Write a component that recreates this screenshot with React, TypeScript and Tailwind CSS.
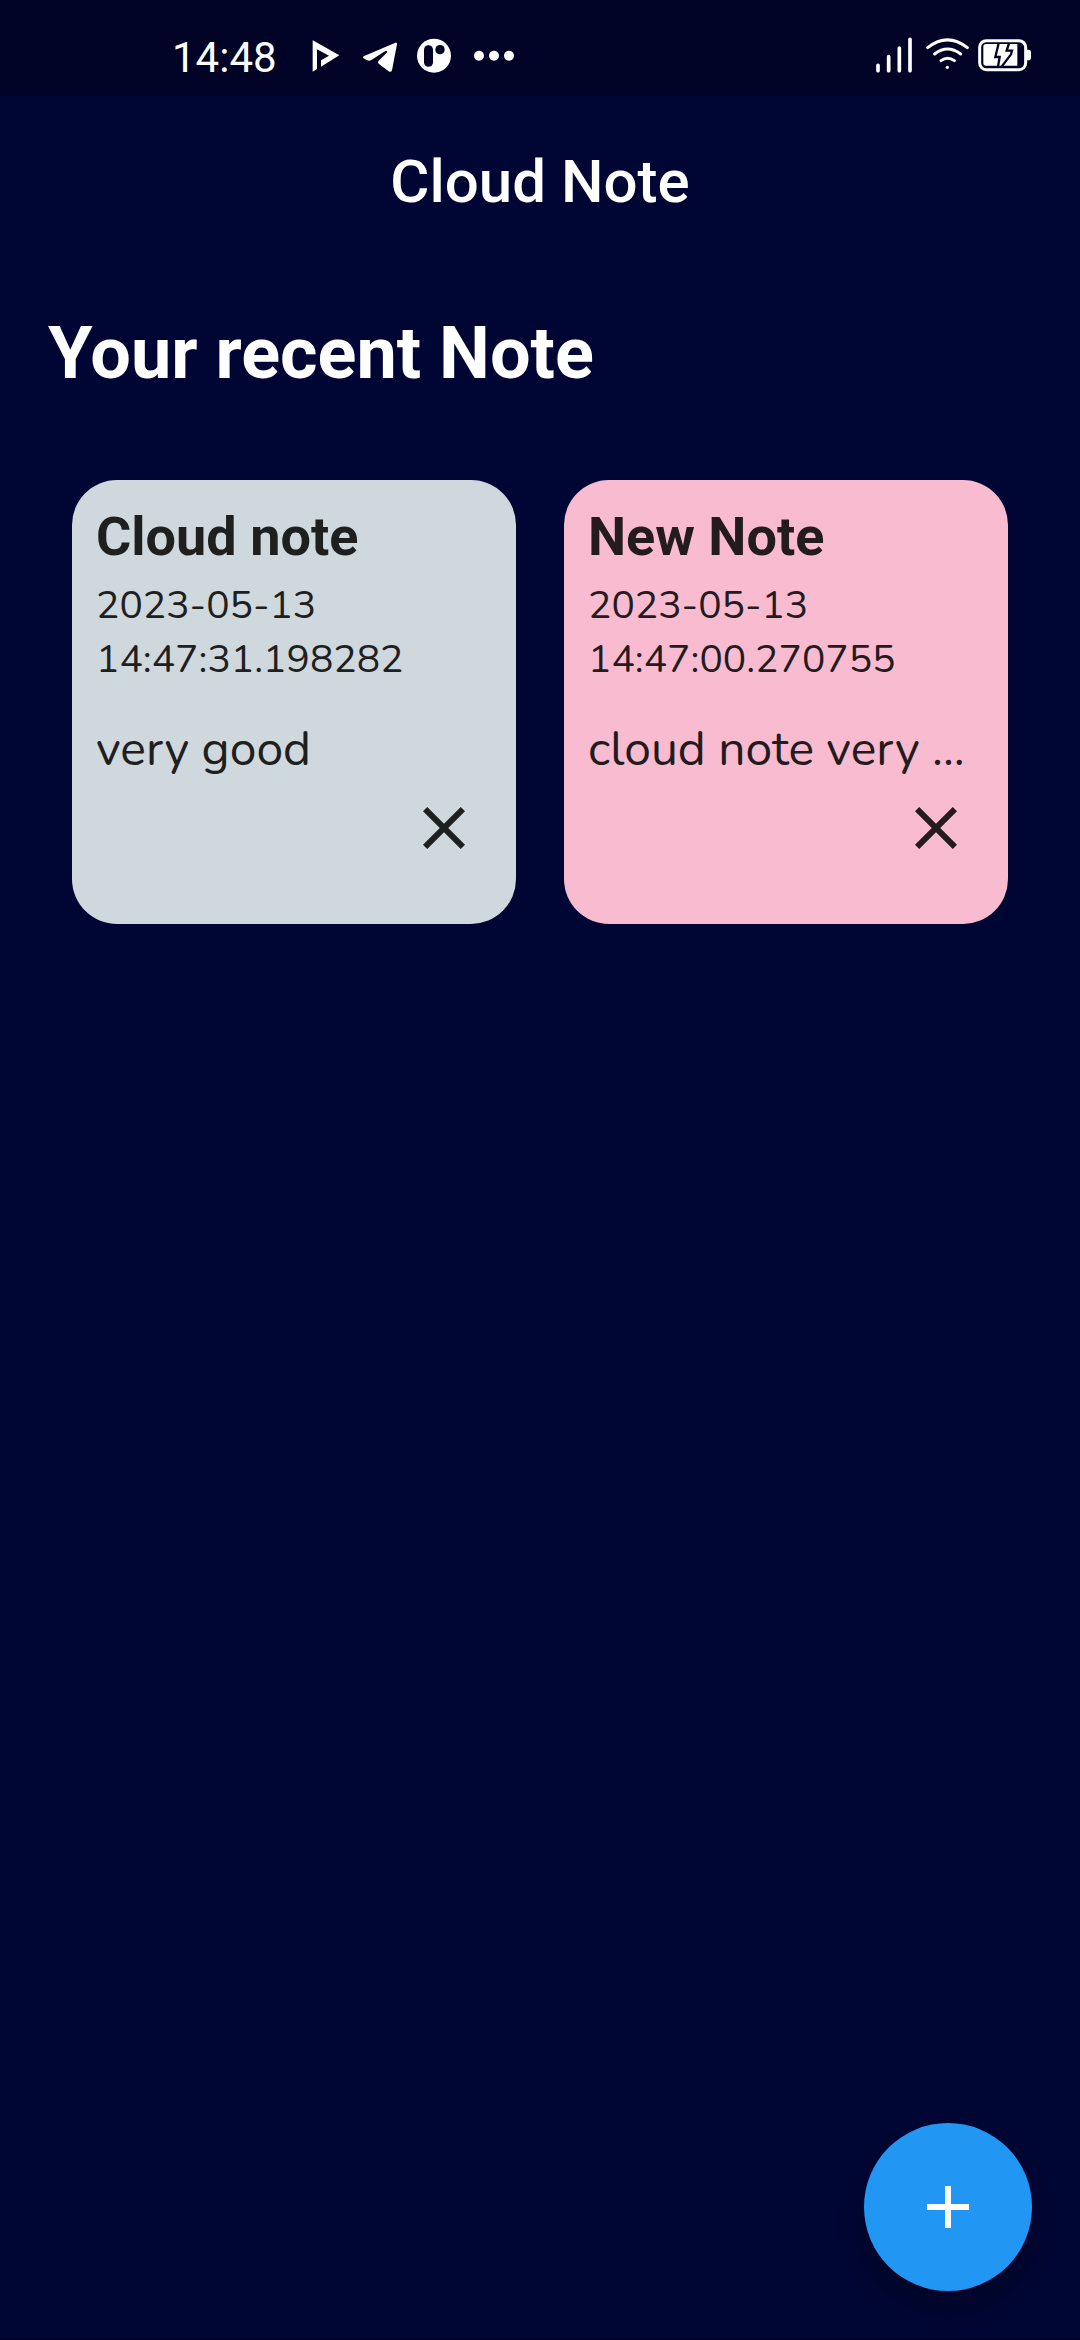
import React from "react";

type Note = { title: string; date: string; body: string; tone: string };

const notes: Note[] = [
  { title: "Cloud note", date: "2023-05-13 14:47:31.198282", body: "very good", tone: "bg-[#cfd8dc] text-[#1e201f]" },
  { title: "New Note", date: "2023-05-13 14:47:00.270755", body: "cloud note very ...", tone: "bg-[#f8bbd0] text-[#231b1e]" },
];

function StatusBar() {
  return (
    <div className="flex h-24 items-center justify-between bg-[#000326] pt-[14px] pr-12 pl-[172px] text-white">
      <div className="flex items-center gap-[34px]">
        <span className="pt-[6px] text-[42px] leading-[48px]">14:48</span>
        <svg className="h-10 w-[205px]" viewBox="483 45 615 120" fill="currentColor" aria-hidden="true">
          <path d="M488 61L568 106L513 140V121L537 107L501 88V147L488 155Z" />
          <path d="M736 68Q742 67 741 73L726 151Q724 157 718 155L686 131Q682 127 686 122L712 97Q712 91 706 93L664 120Q658 124 652 121L640 115Q637 112 641 109Z" />
          <circle cx="852" cy="107" r="51" />
          <rect x="822" y="76" width="27" height="64" rx="13" fill="#000326" />
          <circle cx="870" cy="89" r="14" fill="#000326" />
          <circle cx="987" cy="107" r="15" />
          <circle cx="1032" cy="107" r="15" />
          <circle cx="1077" cy="107" r="15" />
        </svg>
      </div>
      <svg className="h-10 w-[156px]" viewBox="45 45 468 120" fill="none" stroke="currentColor" strokeLinecap="round" aria-hidden="true">
        <path d="M51 136V152M83 110V152M115 84V152M147 58V152" strokeWidth="11" />
        <path d="M200 83Q259 36 319 83M221 102Q259 72 299 102M240 122Q260 107 280 122" strokeWidth="9" />
        <circle cx="259" cy="142" r="5" fill="currentColor" stroke="none" />
        <rect x="356" y="62" width="138" height="87" rx="20" strokeWidth="9" />
        <path d="M498 89H502Q510 89 510 97V113Q510 121 502 121H498Z" fill="currentColor" stroke="none" />
        <path d="M375 72H469V137H375Q367 137 367 129V80Q367 72 375 72Z" fill="currentColor" stroke="none" />
        <path d="M413 70L403 111H416L411 140M444 70L437 92H453L450 103L422 140" stroke="#000326" strokeWidth="7" strokeLinecap="butt" />
      </svg>
    </div>
  );
}

function NoteCard({ note }: { note: Note }) {
  return (
    <article className={`flex aspect-square flex-col rounded-[45px] px-6 pt-6 ${note.tone}`}>
      <h3 className="text-[54px] leading-[66px] font-bold">{note.title}</h3>
      <p className="mt-[9px] font-['Nunito','Lato',sans-serif] text-[39px] leading-[54px]">{note.date}</p>
      <p className="mt-[29px] truncate font-['Nunito','Lato',sans-serif] text-[48px] leading-[66px]">{note.body}</p>
      <div className="mt-[10px] flex justify-end pr-3">
        <button type="button" aria-label={`Delete ${note.title}`}>
          <svg className="size-18" viewBox="0 0 24 24" fill="currentColor" aria-hidden="true">
            <path d="M19 6.41L17.59 5 12 10.59 6.41 5 5 6.41 10.59 12 5 17.59 6.41 19 12 13.41 17.59 19 19 17.59 13.41 12z" />
          </svg>
        </button>
      </div>
    </article>
  );
}

export default function App() {
  return (
    <div className="flex min-h-screen flex-col border-b border-black bg-[#000633] font-['Roboto',sans-serif] text-white">
      <StatusBar />
      <header className="flex h-42 items-center justify-center pt-1">
        <h1 className="text-[60px] leading-[72px] font-medium">Cloud Note</h1>
      </header>
      <main className="flex grow flex-col px-12 pt-12">
        <h2 className="text-[72px] leading-[84px] font-bold">Your recent Note</h2>
        <div className="mt-21 grid grid-cols-2 gap-12 px-6">
          {notes.map((n) => (
            <NoteCard key={n.title} note={n} />
          ))}
        </div>
      </main>
      <button type="button" aria-label="Add note" className="mr-12 mb-12 flex size-42 items-center justify-center self-end rounded-full bg-[#2196f3] shadow-[0_18px_24px_rgba(0,0,0,0.2)]">
        <svg className="size-18" viewBox="0 0 24 24" fill="currentColor" aria-hidden="true">
          <path d="M19 13h-6v6h-2v-6H5v-2h6V5h2v6h6v2z" />
        </svg>
      </button>
    </div>
  );
}
